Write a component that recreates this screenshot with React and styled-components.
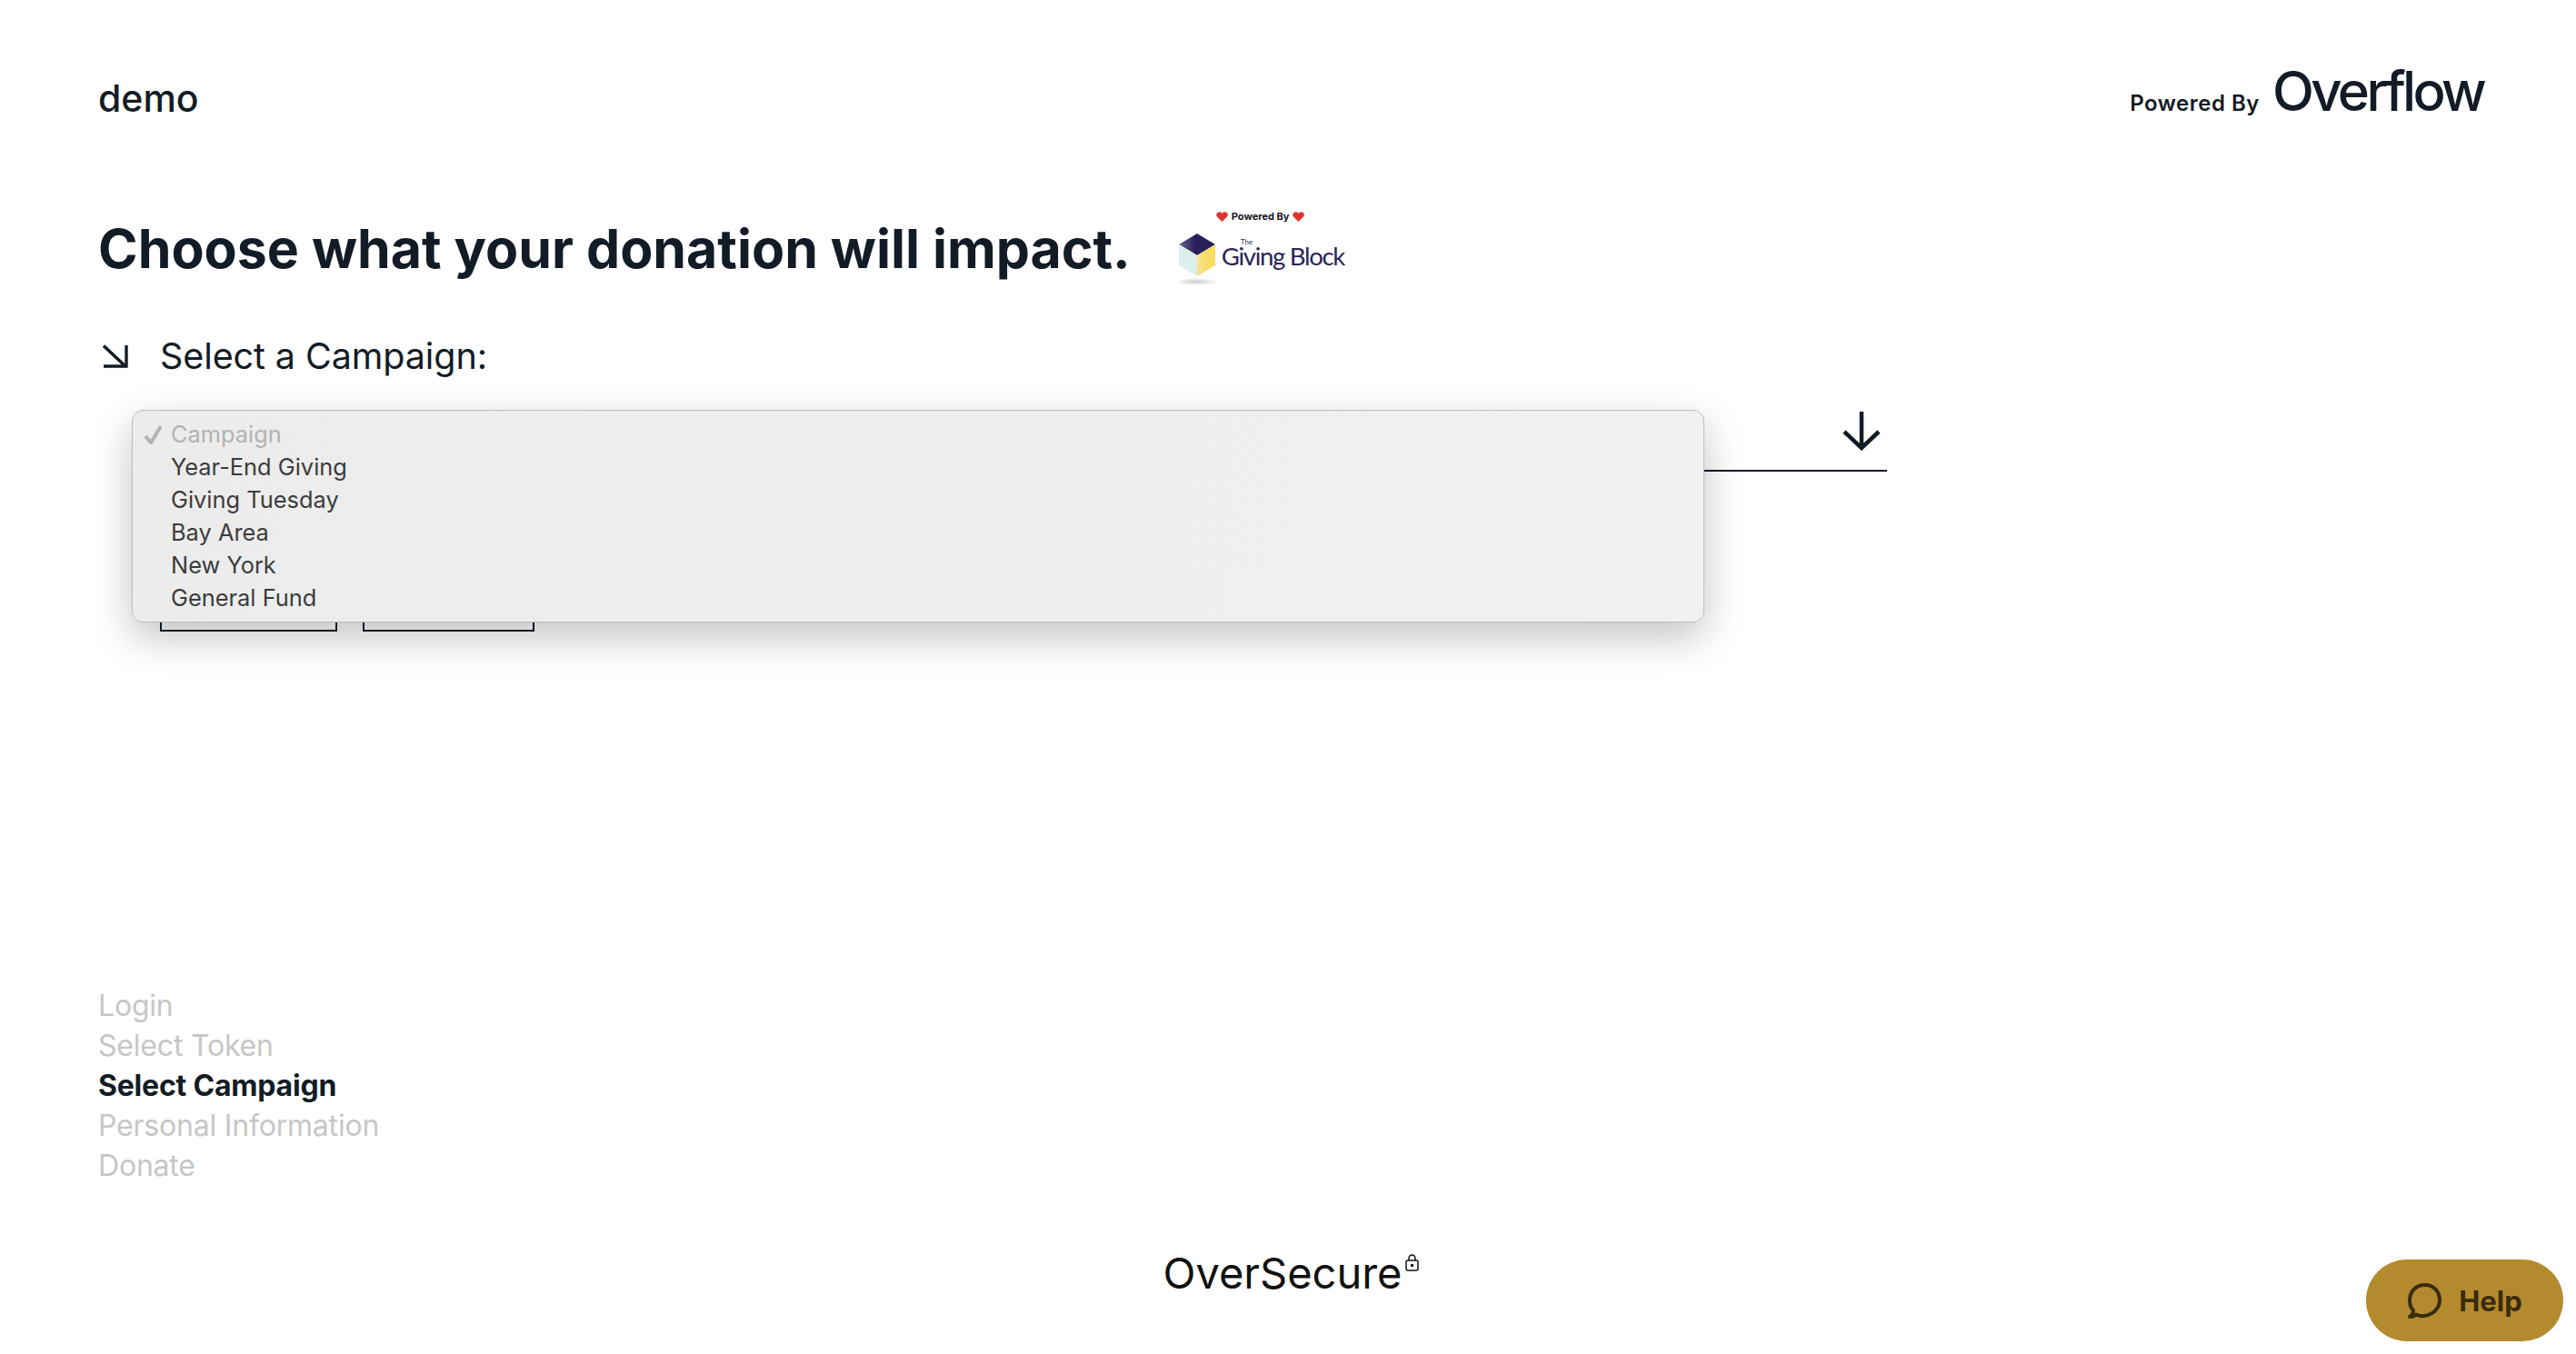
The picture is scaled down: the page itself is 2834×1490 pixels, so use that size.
import React from "react";
import styled, { createGlobalStyle } from "styled-components";

const GlobalStyle = createGlobalStyle`
  html, body {
    margin: 0;
    padding: 0;
    background: #fff;
  }
  body {
    font-family: Inter, "Liberation Sans", sans-serif;
    color: #131c26;
  }
`;

const steps = [
  { label: "Login" },
  { label: "Select Token" },
  { label: "Select Campaign", active: true },
  { label: "Personal Information" },
  { label: "Donate" },
];

const campaigns = ["Year-End Giving", "Giving Tuesday", "Bay Area", "New York", "General Fund"];

const Heart = () => (
  <svg width="13" height="11" viewBox="0 0 13 11">
    <path d="M6.5 11 1 5.6C-.6 3.8.2.6 3 .2c1.500-.2 2.800.5 3.500 1.700C7.200.7 8.500 0 10 .2c2.800.4 3.600 3.600 2 5.400z" fill="#e0352e" />
  </svg>
);

const Cube = () => (
  <svg width="42" height="58" viewBox="0 0 42 58">
    <defs>
      <linearGradient id="cubeTop" x1="0" y1="0" x2="1" y2="0">
        <stop offset="0" stopColor="#6a6290" />
        <stop offset="0.45" stopColor="#27205a" />
      </linearGradient>
      <linearGradient id="cubeRight" x1="0" y1="0" x2="1" y2="0">
        <stop offset="0" stopColor="#f8e39a" />
        <stop offset="0.5" stopColor="#f7dc63" />
      </linearGradient>
      <radialGradient id="cubeShadow">
        <stop offset="0" stopColor="#cfcbc4" />
        <stop offset="1" stopColor="#ffffff" />
      </radialGradient>
    </defs>
    <ellipse cx="20" cy="53" rx="25" ry="4" fill="url(#cubeShadow)" />
    <path d="M21 0 41 12 21 24 1 12z" fill="url(#cubeTop)" />
    <path d="M1 12 21 24V47L1 35z" fill="#dcefec" />
    <path d="M41 12 21 24V47L41 35z" fill="url(#cubeRight)" />
  </svg>
);

const App = () => (
  <Page>
    <GlobalStyle />
    <Header>
      <OrgName>demo</OrgName>
      <Brand>
        <BrandLabel>Powered By</BrandLabel>
        <BrandName>Overflow</BrandName>
      </Brand>
    </Header>

    <TitleRow>
      <Title>Choose what your donation will impact.</Title>
      <GivingBlock>
        <GivingPowered>
          <Heart />
          <span>Powered By</span>
          <Heart />
        </GivingPowered>
        <GivingLogo>
          <Cube />
          <GivingName>
            <GivingThe>The</GivingThe>
            Giving Block
          </GivingName>
        </GivingLogo>
      </GivingBlock>
    </TitleRow>

    <PromptRow>
      <svg width="28" height="26" viewBox="0 0 28 26" fill="none" stroke="#131c26" strokeWidth="3.4">
        <path d="M1 1.500 25 24M26 1v23H1" />
      </svg>
      <Prompt>Select a Campaign:</Prompt>
    </PromptRow>

    <FieldArea>
      <SelectField>
        <svg width="42" height="43" viewBox="0 0 42 43" fill="none" stroke="#131c26" strokeWidth="4.500">
          <path d="M21 0V39M2 22 21 40 40 22" />
        </svg>
      </SelectField>
      <Buttons>
        <OutlineButton $width={195} />
        <OutlineButton $width={189} />
      </Buttons>
      <Menu>
        <MenuItem $disabled>
          <Check viewBox="0 0 22 22" fill="none" stroke="#b3b3b3" strokeWidth="4">
            <path d="M2 13 8 20 19 2" />
          </Check>
          Campaign
        </MenuItem>
        {campaigns.map((name) => (
          <MenuItem key={name}>{name}</MenuItem>
        ))}
      </Menu>
    </FieldArea>

    <Steps>
      {steps.map((step) => (
        <Step key={step.label} $active={step.active}>
          {step.label}
        </Step>
      ))}
    </Steps>

    <Footer>
      <SecureName>OverSecure</SecureName>
      <LockIcon viewBox="0 0 15 19" fill="none" stroke="#111" strokeWidth="1.500">
        <rect x="1" y="7" width="13" height="11" rx="2" />
        <path d="M4 7V4.500a3.500 3.500 0 0 1 7 0V7" />
        <circle cx="7.500" cy="12.500" r="1" fill="#111" />
      </LockIcon>
    </Footer>

    <HelpButton>
      <svg width="40" height="40" viewBox="0 0 40 40" fill="none" stroke="#3a2c0e" strokeWidth="4" strokeLinejoin="round" strokeLinecap="round">
        <path d="M3 38c3 0 5-.500 7-2.500 3 1.500 6 2 9 1.500C28 36 36 29 36 20 36 10 29 3 20 3 10 3 3 10 3 20c0 4 1 8 4 11 0 3-1.500 5.500-4 7z" />
      </svg>
      Help
    </HelpButton>
  </Page>
);

export default App;

const Page = styled.div`
  position: relative;
  display: flex;
  flex-direction: column;
  box-sizing: border-box;
  height: 1490px;
  padding: 0 102px 61px 108px;
  overflow: hidden;
`;

const Header = styled.header`
  display: flex;
  justify-content: space-between;
  align-items: flex-end;
  height: 130px;
`;

const OrgName = styled.div`
  font-size: 41px;
  line-height: 48px;
  font-weight: 500;
  margin-bottom: -2px;
`;

const Brand = styled.div`
  display: flex;
  align-items: baseline;
  gap: 14px;
`;

const BrandLabel = styled.span`
  font-size: 24px;
  font-weight: 600;
  letter-spacing: 0.5px;
`;

const BrandName = styled.span`
  font-size: 60px;
  line-height: 60px;
  font-weight: 500;
  letter-spacing: -3.7px;
`;

const TitleRow = styled.div`
  display: flex;
  align-items: flex-start;
  gap: 52px;
  margin-top: 108px;
`;

const Title = styled.h1`
  margin: 0;
  font-size: 59px;
  line-height: 72px;
  font-weight: 700;
`;

const GivingBlock = styled.div`
  display: flex;
  flex-direction: column;
  align-items: flex-start;
  margin-top: -7px;
`;

const GivingPowered = styled.div`
  display: flex;
  align-items: center;
  gap: 4px;
  margin-left: 42px;
  font-size: 11px;
  font-weight: 700;
  color: #15151f;
`;

const GivingLogo = styled.div`
  display: flex;
  align-items: flex-start;
  gap: 6px;
  margin-top: 12px;
`;

const GivingName = styled.div`
  position: relative;
  margin-top: 8px;
  font-family: Lato, sans-serif;
  font-size: 27.5px;
  font-weight: 400;
  letter-spacing: -1.3px;
  color: #2a2456;
  white-space: nowrap;
`;

const GivingThe = styled.span`
  position: absolute;
  left: 21px;
  top: -4px;
  font-size: 8px;
  letter-spacing: 0;
`;

const PromptRow = styled.div`
  display: flex;
  align-items: center;
  gap: 35px;
  margin-top: 53px;
  margin-left: 5px;
`;

const Prompt = styled.div`
  font-size: 39.5px;
  line-height: 48px;
  letter-spacing: -0.1px;
`;

const FieldArea = styled.div`
  position: relative;
  margin-left: 68px;
  margin-top: 37px;
  width: 1900px;
`;

const SelectField = styled.div`
  display: flex;
  justify-content: flex-end;
  box-sizing: border-box;
  height: 66px;
  padding-right: 7px;
  border-bottom: 2px solid #131c26;
`;

const Buttons = styled.div`
  display: flex;
  gap: 28px;
  margin-top: 112px;
`;

const OutlineButton = styled.button`
  box-sizing: border-box;
  width: ${(props) => props.$width}px;
  height: 64px;
  padding: 0;
  background: #fff;
  border: 2px solid #131c26;
`;

const Menu = styled.div`
  position: absolute;
  left: -31px;
  top: -2px;
  box-sizing: border-box;
  width: 1730px;
  height: 234px;
  padding: 8px 0;
  background: linear-gradient(100deg, #ececec, #f1f1f1);
  border: 1px solid #bcbcbc;
  border-radius: 12px;
  box-shadow: 0 16px 44px rgba(0, 0, 0, 0.24);
`;

const MenuItem = styled.div`
  position: relative;
  height: 36px;
  padding-left: 42px;
  font-size: 25.4px;
  line-height: 36px;
  color: ${(props) => (props.$disabled ? "#b3b3b3" : "#3c3c3c")};
`;

const Check = styled.svg`
  position: absolute;
  left: 12px;
  top: 7px;
  width: 22px;
  height: 22px;
`;

const Steps = styled.nav`
  display: flex;
  flex-direction: column;
  margin-top: auto;
  margin-bottom: 68px;
`;

const Step = styled.div`
  font-size: 32px;
  line-height: 44px;
  letter-spacing: -0.2px;
  font-weight: ${(props) => (props.$active ? 700 : 400)};
  color: ${(props) => (props.$active ? "#131c26" : "#c6c6c6")};
`;

const Footer = styled.footer`
  display: flex;
  justify-content: center;
  align-items: flex-start;
  gap: 3px;
`;

const SecureName = styled.span`
  font-size: 47px;
  line-height: 56px;
  color: #111;
`;

const LockIcon = styled.svg`
  width: 15px;
  height: 19px;
  margin-top: 7px;
`;

const HelpButton = styled.button`
  position: absolute;
  right: 14px;
  bottom: 14px;
  display: flex;
  align-items: center;
  justify-content: center;
  gap: 17px;
  width: 217px;
  height: 90px;
  padding: 0;
  border: none;
  border-radius: 45px;
  background: #b48a2e;
  font-family: Inter, sans-serif;
  font-size: 31px;
  font-weight: 700;
  color: #3a2c0e;
`;
